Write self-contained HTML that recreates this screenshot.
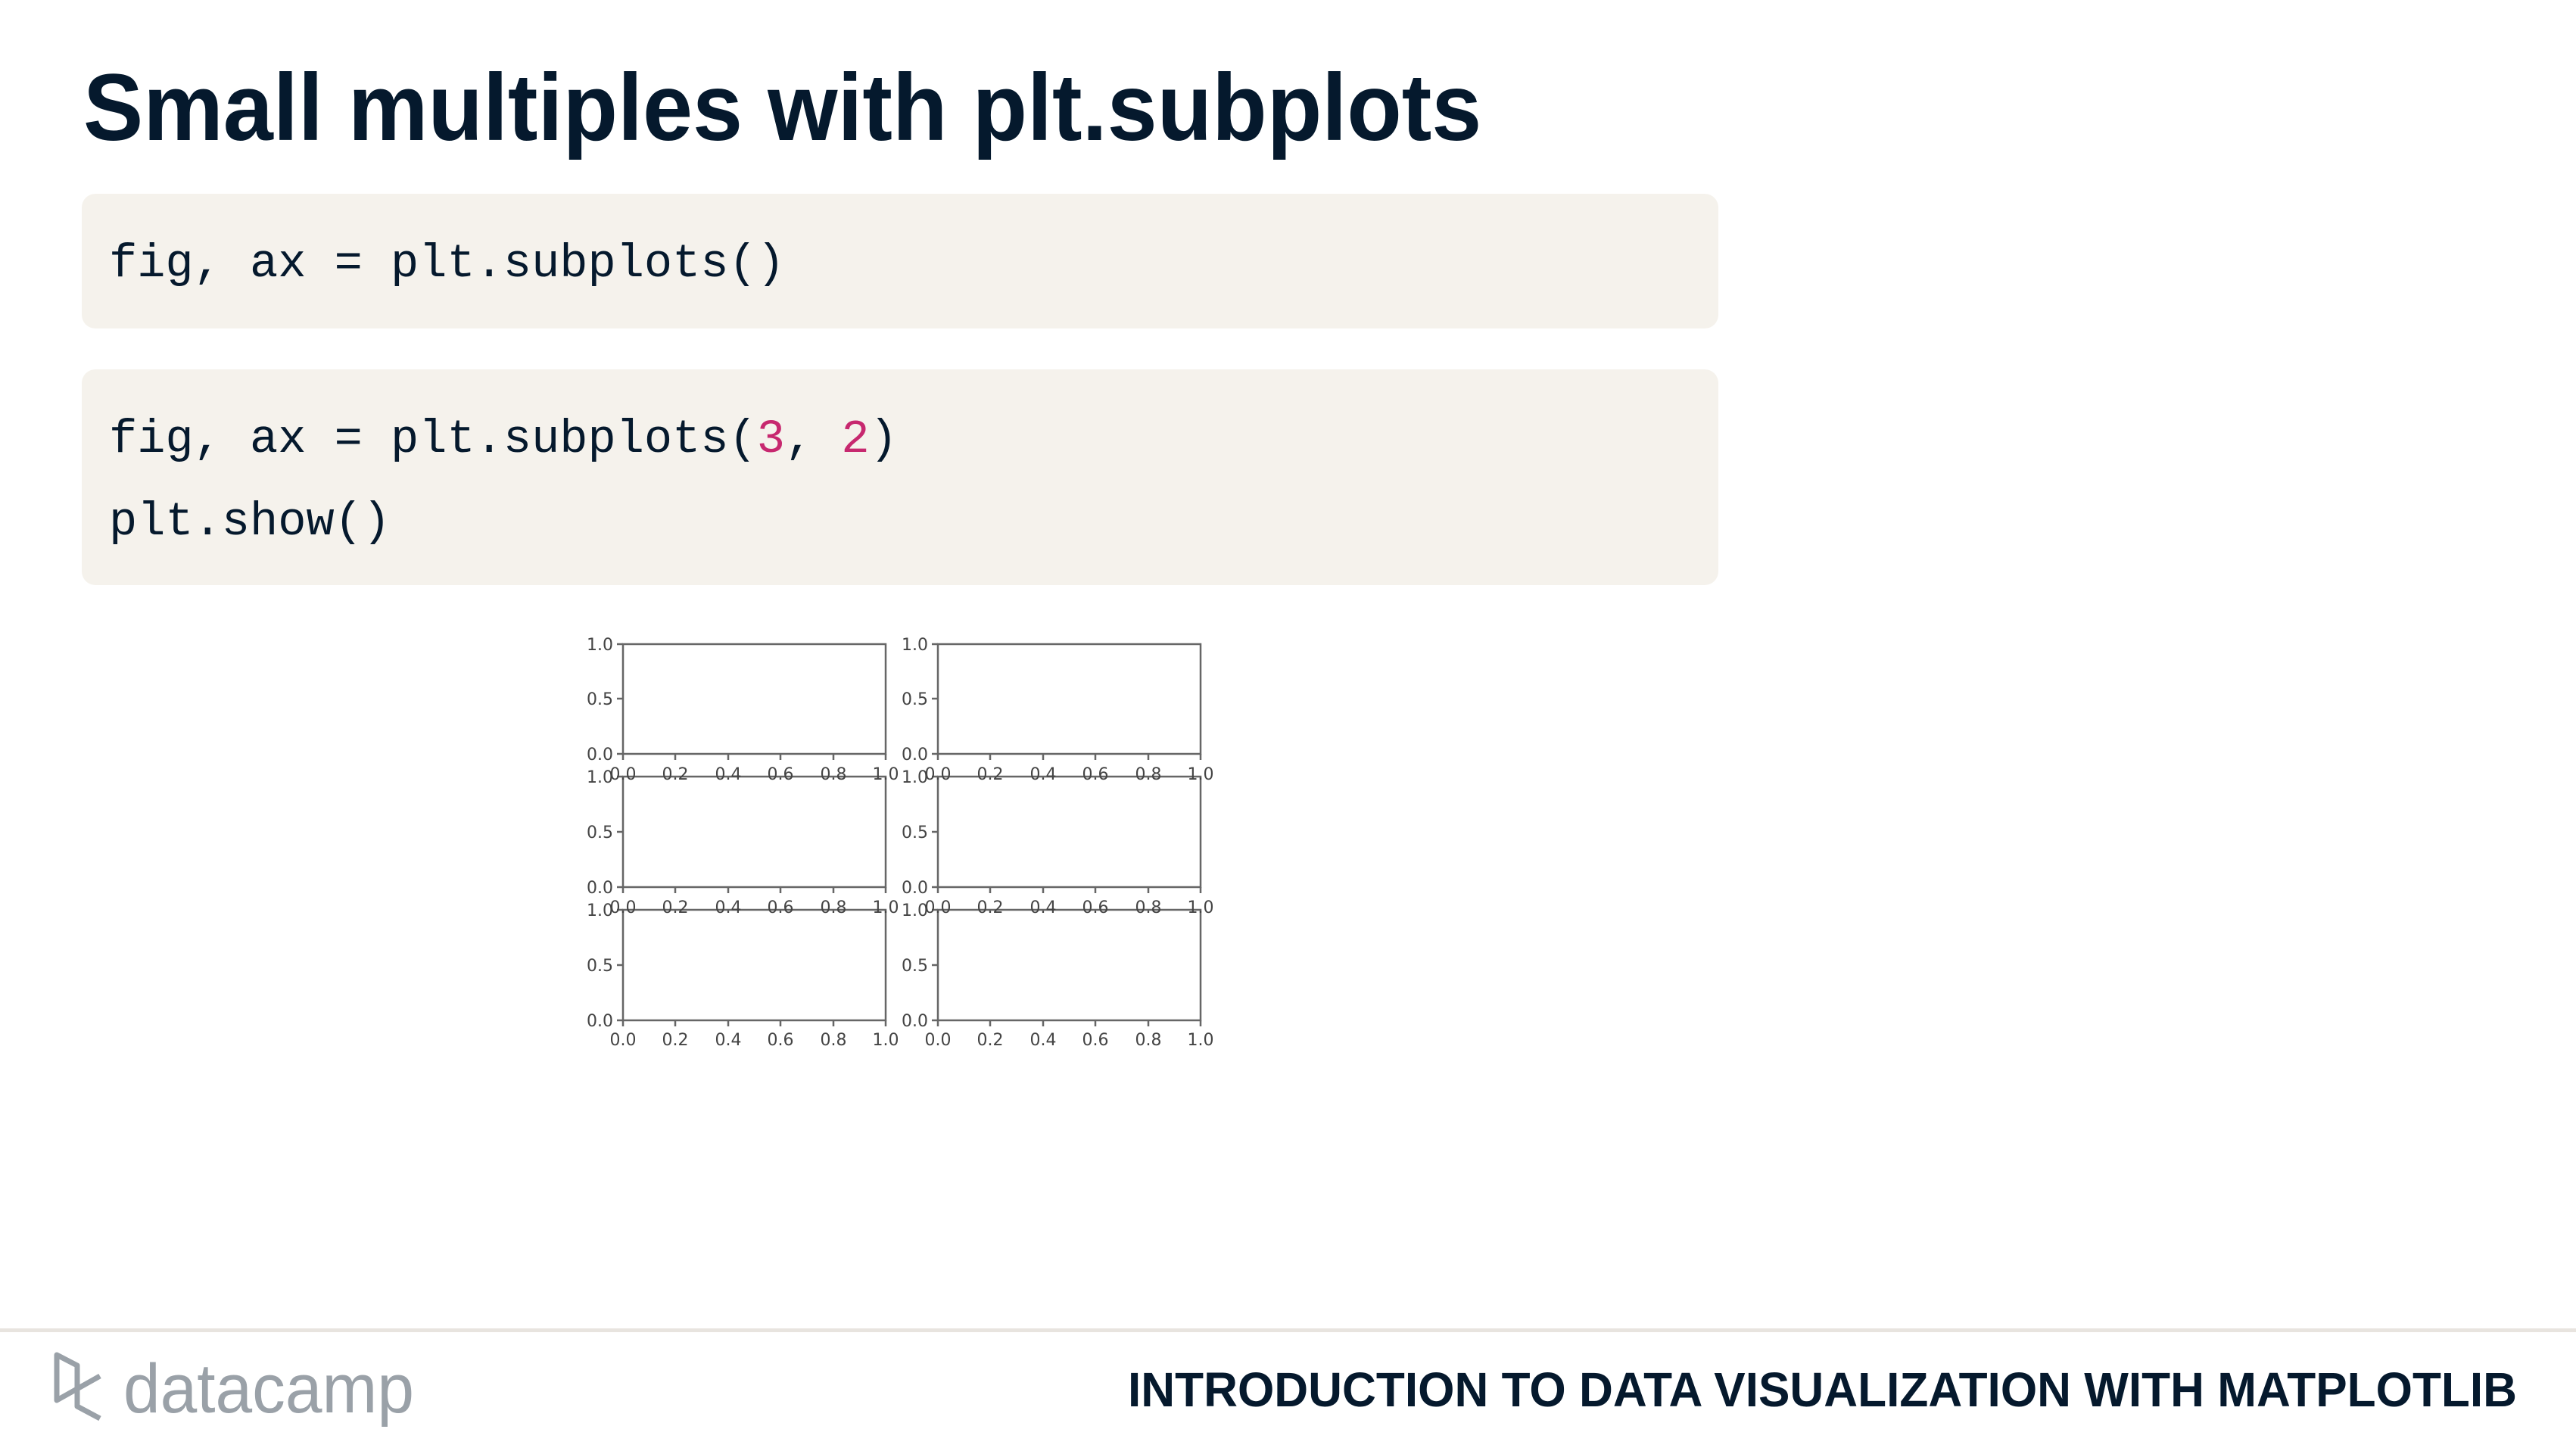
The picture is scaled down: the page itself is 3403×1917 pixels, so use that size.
<!DOCTYPE html>
<html><head><meta charset="utf-8"><style>
body{margin:0;width:3403px;height:1917px;background:#fff;position:relative;overflow:hidden;font-family:"Liberation Sans",sans-serif;color:#05192d}
.t{position:absolute;white-space:nowrap;line-height:1}
.box{position:absolute;left:108px;width:2162px;background:#f5f2ec;border-radius:18px}
.code{position:absolute;font-family:"Liberation Mono",monospace;font-size:62px;white-space:pre;line-height:1;color:#05192d}
.n{color:#c7286f}
</style></head><body>
<div class="t" style="left:110px;top:80px;font-size:125px;font-weight:bold;transform:scaleX(0.95);transform-origin:left top">Small multiples with plt.subplots</div>
<div class="box" style="top:256px;height:178px"></div>
<div class="code" style="left:144px;top:318px">fig, ax = plt.subplots()</div>
<div class="box" style="top:488px;height:285px"></div>
<div class="code" style="left:144px;top:550px">fig, ax = plt.subplots(<span class="n">3</span>, <span class="n">2</span>)</div>
<div class="code" style="left:144px;top:659px">plt.show()</div>
<svg style="position:absolute;left:0;top:0" width="3403" height="1917">
<g stroke="#666" stroke-width="2.5" fill="none">
<rect x="823" y="851" width="347" height="145"/><rect x="1239" y="851" width="347" height="145"/>
<rect x="823" y="1026" width="347" height="146"/><rect x="1239" y="1026" width="347" height="146"/>
<rect x="823" y="1202" width="347" height="146"/><rect x="1239" y="1202" width="347" height="146"/>
<path d="M823 851h-8M823 923h-8M823 996h-8M823 1026h-8M823 1099h-8M823 1172h-8M823 1202h-8M823 1275h-8M823 1348h-8
M1239 851h-8M1239 923h-8M1239 996h-8M1239 1026h-8M1239 1099h-8M1239 1172h-8M1239 1202h-8M1239 1275h-8M1239 1348h-8
M823 996v8M892 996v8M962 996v8M1031 996v8M1101 996v8M1170 996v8
M1239 996v8M1308 996v8M1378 996v8M1447 996v8M1517 996v8M1586 996v8
M823 1172v8M892 1172v8M962 1172v8M1031 1172v8M1101 1172v8M1170 1172v8
M1239 1172v8M1308 1172v8M1378 1172v8M1447 1172v8M1517 1172v8M1586 1172v8
M823 1348v8M892 1348v8M962 1348v8M1031 1348v8M1101 1348v8M1170 1348v8
M1239 1348v8M1308 1348v8M1378 1348v8M1447 1348v8M1517 1348v8M1586 1348v8"/>
</g>
<g font-family="DejaVu Sans,sans-serif" font-size="22" fill="#444" text-anchor="end">
<text x="810" y="859">1.0</text><text x="810" y="931">0.5</text><text x="810" y="1004">0.0</text>
<text x="810" y="1034">1.0</text><text x="810" y="1107">0.5</text><text x="810" y="1180">0.0</text>
<text x="810" y="1210">1.0</text><text x="810" y="1283">0.5</text><text x="810" y="1356">0.0</text>
<text x="1226" y="859">1.0</text><text x="1226" y="931">0.5</text><text x="1226" y="1004">0.0</text>
<text x="1226" y="1034">1.0</text><text x="1226" y="1107">0.5</text><text x="1226" y="1180">0.0</text>
<text x="1226" y="1210">1.0</text><text x="1226" y="1283">0.5</text><text x="1226" y="1356">0.0</text>
</g>
<g font-family="DejaVu Sans,sans-serif" font-size="22" fill="#444" text-anchor="middle">
<text x="823" y="1030">0.0</text><text x="892" y="1030">0.2</text><text x="962" y="1030">0.4</text><text x="1031" y="1030">0.6</text><text x="1101" y="1030">0.8</text><text x="1170" y="1030">1.0</text>
<text x="1239" y="1030">0.0</text><text x="1308" y="1030">0.2</text><text x="1378" y="1030">0.4</text><text x="1447" y="1030">0.6</text><text x="1517" y="1030">0.8</text><text x="1586" y="1030">1.0</text>
<text x="823" y="1206">0.0</text><text x="892" y="1206">0.2</text><text x="962" y="1206">0.4</text><text x="1031" y="1206">0.6</text><text x="1101" y="1206">0.8</text><text x="1170" y="1206">1.0</text>
<text x="1239" y="1206">0.0</text><text x="1308" y="1206">0.2</text><text x="1378" y="1206">0.4</text><text x="1447" y="1206">0.6</text><text x="1517" y="1206">0.8</text><text x="1586" y="1206">1.0</text>
<text x="823" y="1381">0.0</text><text x="892" y="1381">0.2</text><text x="962" y="1381">0.4</text><text x="1031" y="1381">0.6</text><text x="1101" y="1381">0.8</text><text x="1170" y="1381">1.0</text>
<text x="1239" y="1381">0.0</text><text x="1308" y="1381">0.2</text><text x="1378" y="1381">0.4</text><text x="1447" y="1381">0.6</text><text x="1517" y="1381">0.8</text><text x="1586" y="1381">1.0</text>
</g>
<rect x="0" y="1755" width="3403" height="5" fill="#e8e4df"/>
<path d="M132 1818 L75 1850 L75 1790 L102 1804 L102 1858 L132 1874" stroke="#9aa1a8" stroke-width="7" fill="none" stroke-linejoin="round"/>
<text x="163" y="1866" font-family="Liberation Sans,sans-serif" font-size="92" fill="#9aa1a8" textLength="384" lengthAdjust="spacingAndGlyphs">datacamp</text>
<text x="1490" y="1858" font-family="Liberation Sans,sans-serif" font-weight="bold" font-size="64" fill="#05192d" textLength="1835" lengthAdjust="spacingAndGlyphs">INTRODUCTION TO DATA VISUALIZATION WITH MATPLOTLIB</text>
</svg>
</body></html>
